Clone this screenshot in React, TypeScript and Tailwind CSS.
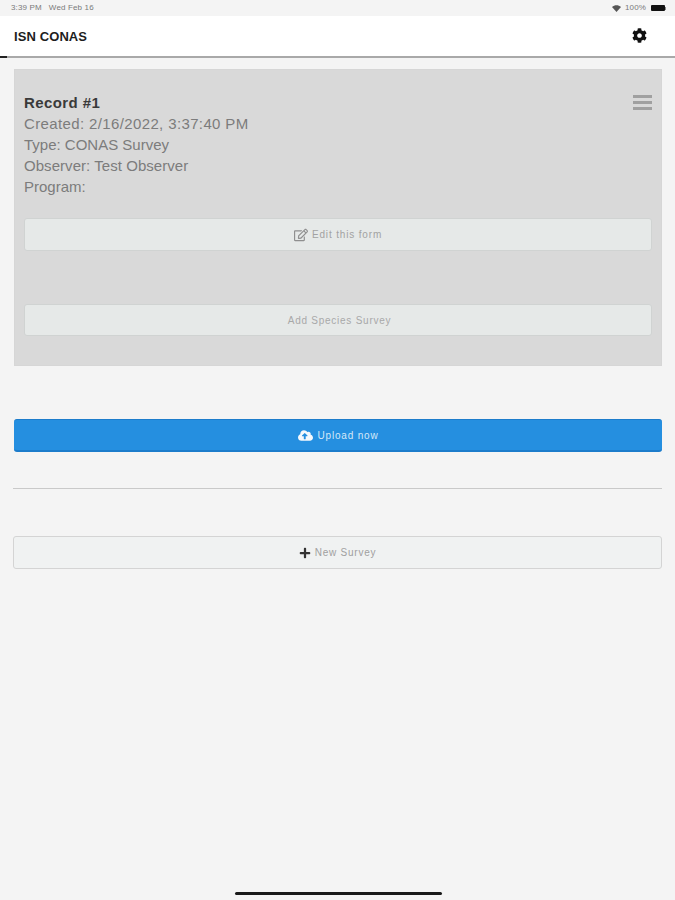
import { FaCloudUploadAlt, FaCog, FaPlus, FaRegEdit } from "react-icons/fa";

const sans = "font-['Liberation_Sans',Arial,sans-serif]";

function App() {
  return (
    <div className={`${sans} flex h-[900px] w-[675px] flex-col overflow-hidden bg-[#f4f4f4]`}>
      {/* status bar */}
      <div className="flex h-4 items-center justify-between bg-[#f4f4f4] pl-[11px] pr-[9px] text-[8px] tracking-[0.15px] text-[#7a7a7a]">
        <div className="flex gap-[7px]">
          <span>3:39 PM</span>
          <span>Wed Feb 16</span>
        </div>
        <div className="flex items-center gap-[4px]">
          <svg width="9" height="7" viewBox="0 0 12 9">
            <path d="M6 9 0 2.6C3.5-.8 8.5-.8 12 2.6z" fill="#555" />
          </svg>
          <span>100%</span>
          <div className="ml-[1px] flex items-center">
            <div className="h-[6px] w-[14px] rounded-[1px] bg-[#111]" />
            <div className="h-[3px] w-[1px] bg-[#888]" />
          </div>
        </div>
      </div>

      {/* header */}
      <div className="relative flex h-[42px] items-center justify-between border-b-2 border-[#a9a9a9] bg-white pl-[14px] pr-[28px]">
        <span className="mt-[1px] text-[13px] font-bold tracking-[0.1px] text-[#1d1d1d]">ISN CONAS</span>
        <FaCog className="-mt-[1px] text-[15px] text-[#111]" />
        <div className="absolute -bottom-[2px] left-0 h-[2px] w-[7px] bg-[#222]" />
      </div>

      <div className="flex flex-col px-[13px] pt-[11px]">
        {/* record card */}
        <div className="relative ml-[1px] flex h-[297px] flex-col border border-[#d6d6d6] bg-[#d9d9d9] px-[9px] pt-[22px]">
          <div className="absolute right-[9px] top-[25px] flex w-[19px] flex-col gap-[3px]">
            <div className="h-[3px] bg-[#a0a0a0]" />
            <div className="h-[3px] bg-[#a0a0a0]" />
            <div className="h-[3px] bg-[#a0a0a0]" />
          </div>
          <div className="text-[15px] font-bold leading-[21px] tracking-[0.4px] text-[#3a3a3a]">Record #1</div>
          <div className="text-[15px] leading-[21px] tracking-[0.37px] text-[#7c7c7c]">Created: 2/16/2022, 3:37:40 PM</div>
          <div className="text-[15px] leading-[21px] text-[#7c7c7c]">Type: CONAS Survey</div>
          <div className="text-[15px] leading-[21px] tracking-[0.05px] text-[#7c7c7c]">Observer: Test Observer</div>
          <div className="text-[15px] leading-[21px] text-[#7c7c7c]">Program:</div>

          <button className="mt-[21px] flex h-[33px] items-center justify-center gap-[4px] rounded-[3px] border border-[#d0d3d2] bg-[#e6e9e8] text-[10px] tracking-[0.85px] text-[#a2a2a2]">
            <FaRegEdit className="text-[14px] text-[#8f8f8f]" />
            Edit this form
          </button>
          <button className="mt-[53px] flex h-[32px] items-center justify-center rounded-[3px] border border-[#d0d3d2] bg-[#e6e9e8] pl-[3px] text-[10px] tracking-[0.75px] text-[#a8a8a8]">
            Add Species Survey
          </button>
        </div>

        {/* upload */}
        <button className="ml-[1px] mt-[53px] flex h-[33px] items-center justify-center gap-[5px] rounded-[3px] border-y border-b-2 border-[#1c7ccb] bg-[#258fe0] pt-[1px] text-[10px] tracking-[0.8px] text-[#d5e8f8]">
          <FaCloudUploadAlt className="text-[15px] text-[#f4f8fc]" />
          Upload now
        </button>

        <div className="mt-[36px] h-px bg-[#c9c9c9]" />

        {/* new survey */}
        <button className="mt-[47px] flex h-[33px] items-center justify-center gap-[4px] rounded-[3px] border border-[#d4d4d4] bg-[#f0f2f2] text-[10px] tracking-[0.75px] text-[#a0a0a0]">
          <FaPlus className="text-[12px] text-[#333]" />
          New Survey
        </button>
      </div>

      {/* home indicator */}
      <div className="mt-auto flex justify-center pb-[5px] pl-[2px]">
        <div className="h-[3px] w-[207px] rounded-full bg-[#1a1a1a]" />
      </div>
    </div>
  );
}

export default App;
